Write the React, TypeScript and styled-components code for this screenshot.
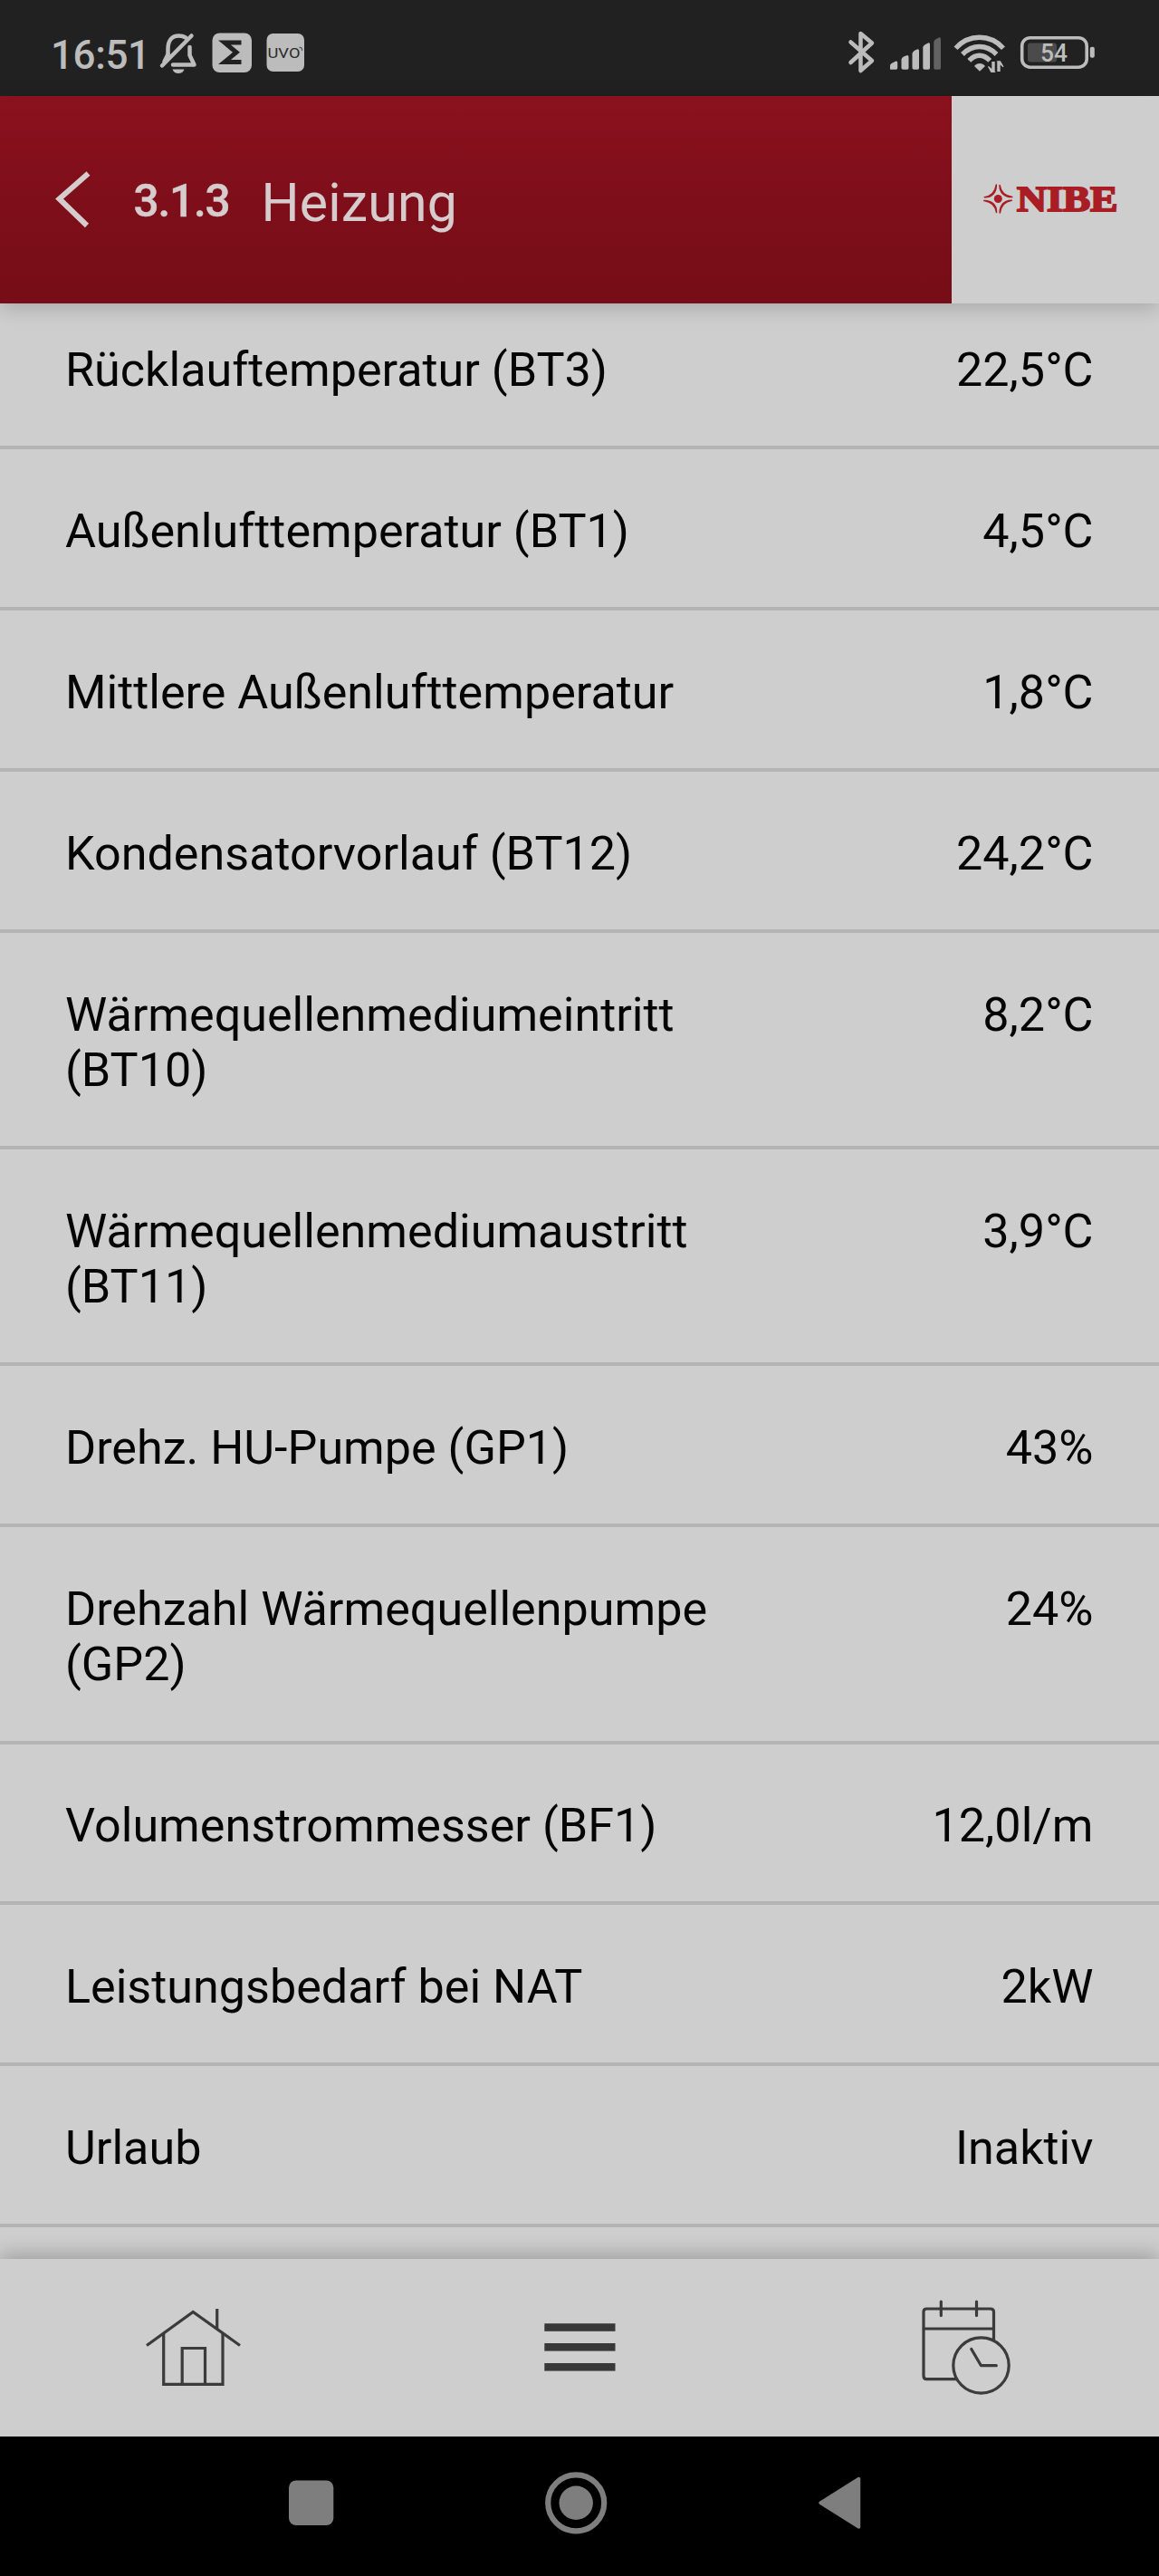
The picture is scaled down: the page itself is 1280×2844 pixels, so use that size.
import React from 'react';
import styled, { createGlobalStyle } from 'styled-components';

const GlobalStyle = createGlobalStyle`
  html, body { margin: 0; padding: 0; background: #cecece; }
  * { box-sizing: border-box; }
  svg { display: block; flex: none; }
`;

const Screen = styled.div`
  width: 1280px;
  height: 2844px;
  display: flex;
  flex-direction: column;
  overflow: hidden;
  background: #cecece;
  color: #050505;
  font-family: Roboto, 'Noto Sans', sans-serif;
`;

const StatusBar = styled.div`
  height: 106px;
  flex: none;
  display: flex;
  justify-content: space-between;
  background: #212121;
  color: #bcbcbc;
`;

const StatusGroup = styled.div`
  display: flex;
`;

const Clock = styled.div`
  width: 116px;
  margin-left: 56px;
  padding-top: 34.5px;
  font-size: 44px;
  line-height: 52px;
  font-weight: 500;
  letter-spacing: -0.4px;
  white-space: nowrap;
`;

const Header = styled.header`
  height: 229px;
  flex: none;
  display: flex;
  position: relative;
  z-index: 1;
  box-shadow: 0 4px 22px rgba(0, 0, 0, 0.2);
`;

const TitleBar = styled.div`
  width: 1051px;
  display: flex;
  align-items: flex-start;
  background: linear-gradient(#8b111e, #7f0f1a 45%, #760d17);
  color: #d6cccd;
`;

const BackIcon = styled.svg`
  margin: 80px 0 0 56px;
`;

const MenuNumber = styled.div`
  width: 141px;
  margin-left: 37.5px;
  padding-top: 86px;
  font-size: 49.5px;
  line-height: 60px;
  font-weight: 500;
  letter-spacing: -1.2px;
  -webkit-text-stroke: 0.5px currentColor;
`;

const Title = styled.h1`
  margin: 0;
  padding-top: 83.5px;
  font-size: 59px;
  line-height: 68px;
  font-weight: 400;
  letter-spacing: 0.2px;
`;

const Brand = styled.div`
  flex: 1;
  background: #cecece;
`;

const List = styled.main`
  flex: 1;
  min-height: 0;
  overflow: hidden;
`;

const Row = styled.div`
  display: flex;
  justify-content: space-between;
  padding: 59.6px 72.5px 53px 72px;
  border-bottom: 4px solid #b4b4b4;
  font-size: 52.1px;
  line-height: 61.3px;

  &:first-child {
    padding-top: 43.1px;
  }
`;

const Label = styled.div`
  width: 760px;
`;

const Value = styled.div`
  white-space: nowrap;
  text-align: right;
`;

const TabBar = styled.nav`
  height: 196px;
  flex: none;
  display: grid;
  grid-template-columns: repeat(3, 1fr);
  position: relative;
  z-index: 1;
  background: #cecece;
  box-shadow: 0 -6px 20px rgba(0, 0, 0, 0.22);
`;

const Tab = styled.div`
  display: flex;
  justify-content: center;
`;

const SystemBar = styled.div`
  height: 154px;
  flex: none;
  background: #000;
`;

const rows: [string, string][] = [
  ['Rücklauftemperatur (BT3)', '22,5°C'],
  ['Außenlufttemperatur (BT1)', '4,5°C'],
  ['Mittlere Außenlufttemperatur', '1,8°C'],
  ['Kondensatorvorlauf (BT12)', '24,2°C'],
  ['Wärmequellenmediumeintritt (BT10)', '8,2°C'],
  ['Wärmequellenmediumaustritt (BT11)', '3,9°C'],
  ['Drehz. HU-Pumpe (GP1)', '43%'],
  ['Drehzahl Wärmequellenpumpe (GP2)', '24%'],
  ['Volumenstrommesser (BF1)', '12,0l/m'],
  ['Leistungsbedarf bei NAT', '2kW'],
  ['Urlaub', 'Inaktiv'],
];

const NotificationIcons = () => (
  <svg width="178" height="106" viewBox="172 0 178 106" fill="none">
    {/* muted bell */}
    <g stroke="#bcbcbc" strokeWidth="4.5" strokeLinecap="round" strokeLinejoin="round">
      <path d="M185.500 61V54C185.500 44.500 190 39.500 197.500 39.500C200.500 39.500 203 40.200 205 41.500" />
      <path d="M209.500 52V61L214.500 71.500H191" />
      <path d="M211.500 39.500L179 72.500" />
      <path d="M185.500 60L181.500 68" />
    </g>
    <path d="M190.500 76.500H203.500C202.500 79.500 200 81 197 81S191.500 79.500 190.500 76.500Z" fill="#bcbcbc" />
    <rect x="234.500" y="36.500" width="43.500" height="43.500" rx="8" fill="#bcbcbc" />
    <path d="M266.500 47H248L261 57.800L248 68.500H266.500" stroke="#212121" strokeWidth="5" />
    <rect x="294.500" y="37" width="41.500" height="42" rx="7" fill="#bcbcbc" />
    <text x="295.500" y="63.500" fontFamily="Roboto, sans-serif" fontSize="15.500" textLength="36" lengthAdjust="spacingAndGlyphs" fill="#2b2b2b">UVO</text>
    <path d="M330.500 52.500C333 52 334 53.500 333.500 56" stroke="#555" strokeWidth="1.300" />
  </svg>
);

const ConnectivityIcons = () => (
  <svg width="350" height="106" viewBox="930 0 350 106" fill="none">
    <path d="M939.500 46.500L963 67L950.500 78V37L963 47.500L939.500 69" stroke="#bcbcbc" strokeWidth="4.500" strokeLinecap="round" strokeLinejoin="round" />
    <g fill="#bcbcbc">
      <path d="M983 76.500V72.500Q983 71 984.500 70L989.500 67.500Q991.200 67.200 991.200 69V75Q991.200 76.800 989.500 76.800H984Z" />
      <path d="M995.500 75V65.500Q996 63.500 998 62.500L1002 61Q1003.500 61 1003.500 63V75Q1003.500 76.800 1002 76.800H997.500Q995.500 76.800 995.500 75Z" />
      <path d="M1007.500 75V59Q1008 57 1010 55.800L1013.500 54.200Q1015 54 1015 56V75Q1015 76.800 1013.500 76.800H1009.500Q1007.500 76.800 1007.500 75Z" />
      <path d="M1019.300 75V52Q1020 50 1022 49L1025.500 47.200Q1027 47 1027 49V75Q1027 76.800 1025.500 76.800H1021Q1019.300 76.800 1019.300 75Z" />
    </g>
    <path d="M1031.300 75V46Q1032 44 1034 43L1037.500 41.200Q1039 41 1039 43V75Q1039 76.800 1037.500 76.800H1033Q1031.300 76.800 1031.300 75Z" fill="#626262" />
    <g stroke="#bcbcbc" strokeWidth="5.400">
      <path d="M1055.500 53.200C1070 37.300 1093.500 37.300 1108 53.200" />
      <path d="M1063 60C1074 48.700 1089.500 48.700 1100.500 60" />
      <path d="M1070.300 66.800C1077.500 59.300 1086 59.300 1093.200 66.800" />
    </g>
    <path d="M1076 73C1079 69 1085 69 1088 73L1082 78.800Z" fill="#bcbcbc" />
    <path d="M1097 68V79M1103 79V68" stroke="#bcbcbc" strokeWidth="3.400" />
    <path d="M1091.500 73.500L1098.200 79.500H1094.800ZM1108 73.800L1102 67.800H1104.500Z" stroke="#bcbcbc" strokeWidth="1.200" fill="#bcbcbc" />
    <rect x="1128.700" y="41.700" width="71.500" height="32.500" rx="9" stroke="#bcbcbc" strokeWidth="3.600" />
    <rect x="1135" y="47.500" width="32" height="21" rx="3" fill="#4b4b4b" />
    <text x="1149" y="68" fontFamily="Roboto, sans-serif" fontWeight="500" fontSize="27" textLength="30" lengthAdjust="spacingAndGlyphs" fill="#bcbcbc">54</text>
    <rect x="1203.800" y="51.800" width="5" height="12" rx="2" fill="#bcbcbc" />
  </svg>
);

const NibeLogo = () => (
  <svg width="229" height="229" viewBox="1051 106 229 229">
    <g transform="translate(1102.300 219.500)" fill="#a91d24">
      <circle r="4.500" />
      {[0, 90, 180, 270].map((angle) => (
        <path key={angle} transform={`rotate(${angle})`} d="M1.800 -15C2.800 -8 7.500 -3.200 15.500 -2C7 -1.800 1.600 -7 1.800 -15Z" stroke="#a91d24" strokeWidth="1.600" strokeLinejoin="round" />
      ))}
    </g>
    <text x="1123" y="233" fontFamily="'Liberation Serif', serif" fontWeight="700" fontSize="40" textLength="111.500" lengthAdjust="spacingAndGlyphs" fill="#a91d24" stroke="#a91d24" strokeWidth="2">NIBE</text>
  </svg>
);

const HouseIcon = () => (
  <svg width="427" height="196" viewBox="0 2494 427 196" fill="none" stroke="#3b3b3b" strokeWidth="3.200">
    <path d="M162 2589.500L213.200 2552.500L265 2589.500" />
    <path d="M180.700 2576V2632.300H246V2576M239.700 2549V2571" />
    <path d="M201.200 2632V2592.500H226.500V2632" />
  </svg>
);

const MenuIcon = () => (
  <svg width="427" height="196" viewBox="426.500 2494 427 196" fill="#383838">
    <rect x="600.800" y="2565.200" width="78.200" height="8.600" />
    <rect x="600.800" y="2587" width="78.200" height="8.600" />
    <rect x="600.800" y="2609" width="78.200" height="8.600" />
  </svg>
);

const ScheduleIcon = () => (
  <svg width="427" height="196" viewBox="853.700 2494 427 196" fill="none" stroke="#3b3b3b" strokeWidth="3.200" strokeLinecap="round" strokeLinejoin="round">
    <path d="M1055.500 2626.700H1023Q1019.700 2626.700 1019.700 2623V2552.500Q1019.700 2549 1023 2549H1093.500Q1097.200 2549 1097.200 2552.500V2583" />
    <path d="M1020 2571H1097M1039 2541V2556.500M1078.200 2541V2556.500" />
    <circle cx="1083.200" cy="2611.500" r="30.700" />
    <path d="M1072.500 2593.500L1083.200 2611.700H1100" />
  </svg>
);

const SystemButtons = () => (
  <svg width="1280" height="154" viewBox="0 2690 1280 154" fill="#7e7e7e">
    <rect x="319" y="2738.500" width="49.300" height="49.500" rx="8" />
    <circle cx="636.200" cy="2763.300" r="31" fill="none" stroke="#7e7e7e" strokeWidth="6.200" />
    <circle cx="636.200" cy="2763.300" r="18.700" />
    <path d="M906 2763.300L948.500 2736.500V2790Z" stroke="#7e7e7e" strokeWidth="3.500" strokeLinejoin="round" />
  </svg>
);

export default function App() {
  return (
    <>
      <GlobalStyle />
      <Screen>
        <StatusBar>
          <StatusGroup>
            <Clock>16:51</Clock>
            <NotificationIcons />
          </StatusGroup>
          <ConnectivityIcons />
        </StatusBar>
        <Header>
          <TitleBar>
            <BackIcon width="54" height="80" viewBox="56 186 54 80" fill="none" stroke="#d6cccd" strokeWidth="6">
              <path d="M97.500 191.500L65.500 219.500L96 249" />
            </BackIcon>
            <MenuNumber>3.1.3</MenuNumber>
            <Title>Heizung</Title>
          </TitleBar>
          <Brand>
            <NibeLogo />
          </Brand>
        </Header>
        <List>
          {rows.map(([label, value]) => (
            <Row key={label}>
              <Label>{label}</Label>
              <Value>{value}</Value>
            </Row>
          ))}
        </List>
        <TabBar>
          <Tab><HouseIcon /></Tab>
          <Tab><MenuIcon /></Tab>
          <Tab><ScheduleIcon /></Tab>
        </TabBar>
        <SystemBar>
          <SystemButtons />
        </SystemBar>
      </Screen>
    </>
  );
}
